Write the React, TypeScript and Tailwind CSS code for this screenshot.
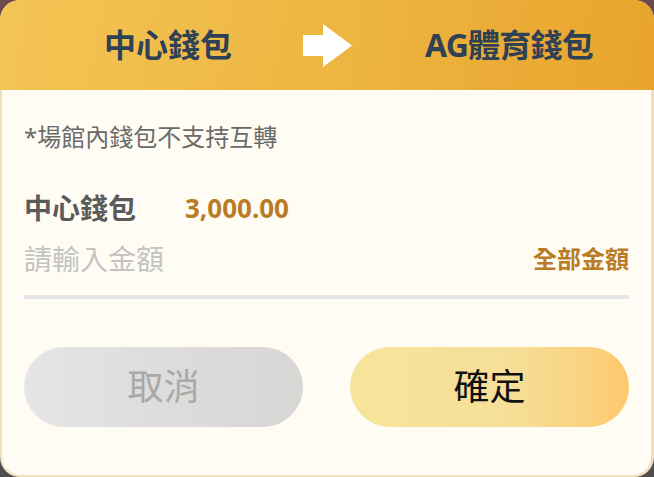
import React from "react";

export default function App() {
  return (
    <div className="w-[654px] h-[477px] bg-[linear-gradient(180deg,#6b4a4d_0%,#5a4f50_50%,#4e4e4e_100%)] font-['Noto_Sans','Noto_Sans_CJK_TC',sans-serif]">
      <div className="w-full h-full rounded-[20px] overflow-hidden flex flex-col bg-[#efdfbf]">
        <div className="h-[90px] shrink-0 flex items-center pl-[104px] bg-[linear-gradient(100deg,#f3c555_0%,#edb440_55%,#e8a42d_100%)]">
          <span className="text-[32px] leading-none font-bold text-[#2f4155]">中心錢包</span>
          <svg width="49" height="43" viewBox="0 0 49 43" className="ml-[71px] mt-[1px]">
            <rect x="0" y="11" width="21" height="21" fill="#ffffff" />
            <polygon points="20,0 49,21.5 20,43" fill="#ffffff" />
          </svg>
          <span className="ml-[73px] text-[32px] leading-none font-bold tracking-[-0.8px] text-[#2f4155]">AG體育錢包</span>
        </div>
        <div className="flex-1 ml-[2px] mr-[3px] mb-[2px] rounded-b-[18px] bg-[#fffcf4] px-[22px] pt-[35px] flex flex-col">
          <div className="text-[24px] leading-none text-[#6a6a6a]">*場館內錢包不支持互轉</div>
          <div className="mt-[45px] flex items-center">
            <span className="w-[161px] text-[28px] leading-none font-bold text-[#5a5a5a]">中心錢包</span>
            <span className="text-[26px] leading-none font-bold text-[#b97b25]">3,000.00</span>
          </div>
          <div className="mt-[23px] flex items-center justify-between">
            <span className="text-[28px] leading-none text-[#c3c3c3]">請輸入金額</span>
            <span className="text-[24px] leading-none font-bold text-[#b97b25]">全部金額</span>
          </div>
          <div className="mt-[22px] h-[4px] bg-[#e7e6ec]" />
          <div className="mt-[48px] flex gap-[47px]">
            <button className="flex-1 h-[80px] rounded-full bg-[linear-gradient(90deg,#e5e5e5_0%,#dcdbda_60%,#d8d7d6_100%)] text-[36px] leading-none text-[#a9a9a9] flex items-center justify-center">
              取消
            </button>
            <button className="flex-1 h-[80px] rounded-full bg-[linear-gradient(90deg,#f7e49b_0%,#f6df98_55%,#f9d585_80%,#fdc86a_100%)] text-[36px] leading-none text-[#111111] flex items-center justify-center">
              確定
            </button>
          </div>
        </div>
      </div>
    </div>
  );
}
